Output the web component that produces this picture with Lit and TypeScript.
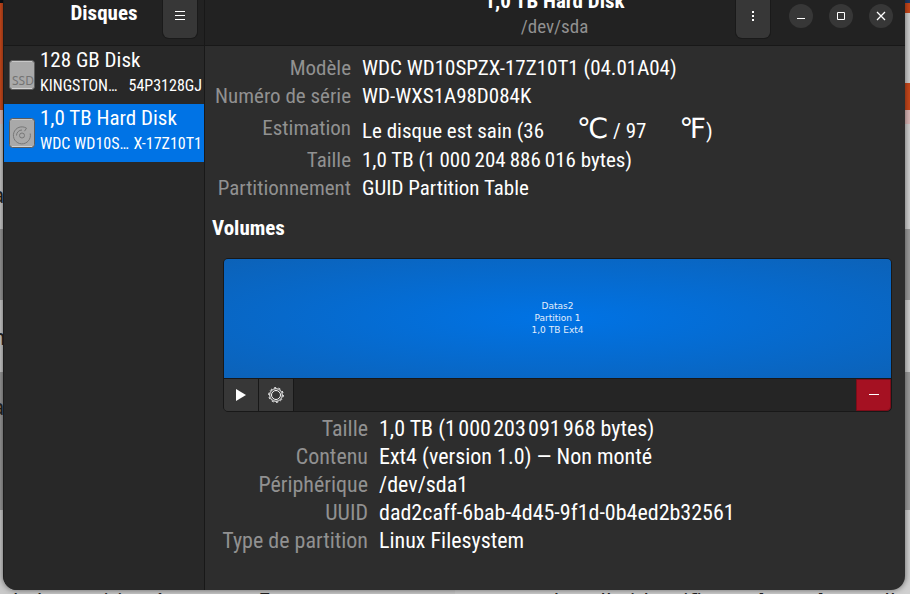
import { LitElement, html, css } from "lit";
import { customElement } from "lit/decorators.js";

type Row = [label: string, value: unknown];

const driveRows: Row[] = [
  ["Modèle", "WDC WD10SPZX-17Z10T1 (04.01A04)"],
  ["Numéro de série", "WD-WXS1A98D084K"],
  [
    "Estimation",
    html`Le disque est sain (36 <span class="unit">℃</span> / 97 <span class="unit">℉</span>)`,
  ],
  ["Taille", "1,0 TB (1\u2009000\u2009204\u2009886\u2009016 bytes)"],
  ["Partitionnement", "GUID Partition Table"],
];

const volumeRows: Row[] = [
  ["Taille", "1,0 TB (1\u200a000\u200a203\u200a091\u200a968 bytes)"],
  ["Contenu", "Ext4 (version 1.0) — Non monté"],
  ["Périphérique", "/dev/sda1"],
  ["UUID", "dad2caff-6bab-4d45-9f1d-0b4ed2b32561"],
  ["Type de partition", "Linux Filesystem"],
];

@customElement("app-root")
export class AppRoot extends LitElement {
  static styles = css`
    * {
      box-sizing: border-box;
    }
    :host {
      display: block;
      position: relative;
      height: 100vh;
      overflow: hidden;
      color: #fff;
      font: 22px/28px "Roboto Condensed", "Liberation Sans Narrow",
        "DejaVu Sans Condensed", sans-serif;
      background:
        linear-gradient(#0b1016 3px, #cc4a1c 3px 110px, #dcbcb8 110px 124px, #c9c9c9 124px 229px, #989898 229px 300px, #c9c9c9 300px 372px, #989898 372px 510px, #c9c9c9 510px) left / 50% 100% no-repeat,
        linear-gradient(#1e3a66 3px, #c9481b 3px 13px, #cfcfcf 13px 83px, #c9481b 83px 110px, #dcb8b8 110px 124px, #d0d0d0 124px 229px, #9c9c9c 229px 300px, #d0d0d0 300px 372px, #9c9c9c 372px 510px, #d0d0d0 510px) right / 50% 100% no-repeat;
    }
    button {
      display: grid;
      place-items: center;
      padding: 0;
      border: 0;
      color: #fff;
      background: #373737;
    }
    .behind {
      position: absolute;
      inset: auto 2px -20px 5px;
      display: flex;
      justify-content: space-between;
      white-space: pre;
      color: #222;
      font: 22px/28px "Noto Sans", sans-serif;
    }
    .edge {
      position: absolute;
      inset: 180px auto auto -8px;
      display: grid;
      grid-template-rows: 142px 70px 28px;
      color: #222;
      font: 22px/28px "Noto Sans", sans-serif;
    }
    .window {
      position: relative;
      display: grid;
      grid-template: 59px 1fr / 201px 1fr;
      height: calc(100% + 9px);
      margin: -13px 5px 0 3px;
      overflow: hidden;
      border-radius: 14px;
      border-left: 1px solid #1c1c1c;
      background: #2d2d2d;
      box-shadow: 0 0 6px #0008;
    }
    .bar {
      display: flex;
      align-items: center;
      gap: 12px;
      border-bottom: 1px solid #181818;
      background: #222;
    }
    .bar.left {
      padding: 0 7px;
      border-right: 1px solid #181818;
    }
    .bar.right {
      padding: 0 12px;
      gap: 16px;
    }
    h1,
    h2,
    p {
      margin: 0;
      font-size: 21px;
    }
    .bar h1 {
      flex: 1;
      padding: 0 0 6px 46px;
      text-align: center;
      line-height: 26px;
    }
    .title {
      flex: 1;
      padding: 0 0 4px 172px;
      text-align: center;
      line-height: 26px;
    }
    .title p,
    dt {
      color: #919191;
    }
    .title p {
      font-size: 19px;
    }
    .menu {
      width: 34px;
      height: 43px;
      border-radius: 6px;
      box-shadow: 0 0 0 1px #1a1a1a;
    }
    .more {
      margin-right: 3px;
    }
    .round {
      width: 24px;
      height: 24px;
      border-radius: 50%;
    }
    aside {
      border-right: 1px solid #181818;
      background: #282828;
    }
    .drive {
      display: flex;
      align-items: center;
      gap: 5px;
      width: 100%;
      height: 58px;
      padding: 0 2px 0 5px;
      text-align: left;
      font: inherit;
      background: none;
    }
    .drive.on {
      background: #0073e5;
    }
    .drive svg {
      flex: none;
    }
    .names {
      flex: 1;
      display: grid;
      padding-bottom: 6px;
      font-size: 21px;
      white-space: nowrap;
    }
    .names small {
      display: flex;
      justify-content: space-between;
      font-size: 16px;
      line-height: 24px;
    }
    main {
      padding: 8px 13px 0 7px;
    }
    dl {
      display: grid;
      grid-template-columns: 139px 1fr;
      column-gap: 11px;
      margin: 0;
      font-size: 21px;
    }
    dl.volume {
      grid-template-columns: 156px 1fr;
      margin-top: 3px;
      font-size: 22px;
    }
    dt {
      text-align: right;
      white-space: nowrap;
    }
    dd {
      margin: 0;
      white-space: nowrap;
    }
    .tall {
      height: 36px;
      line-height: 36px;
    }
    dd.tall {
      line-height: 42px;
    }
    .unit {
      display: inline-block;
      padding-left: 28px;
      font: 28px/28px "DejaVu Sans", sans-serif;
    }
    main h2 {
      margin-top: 12px;
    }
    .map {
      margin: 16px 0 0 11px;
      border: 1px solid #181818;
      border-radius: 5px;
      overflow: hidden;
      background: #252525;
    }
    .part {
      display: grid;
      place-content: center;
      justify-items: center;
      width: 100%;
      height: 120px;
      padding-bottom: 2px;
      color: #e4eefb;
      font: 9px/12px "DejaVu Sans", sans-serif;
      background: radial-gradient(ellipse farthest-corner, #0073e5, #0c62b8);
      border-bottom: 1px solid #181818;
    }
    .tools {
      display: flex;
      height: 32px;
    }
    .tools button {
      width: 35px;
      border-right: 1px solid #181818;
    }
    .tools .delete {
      width: 35px;
      margin-left: auto;
      border: 1px solid #7c0d19;
      border-radius: 0 0 4px 0;
      background: #a51122;
    }
  `;

  private rows(rows: Row[], kind: string) {
    return html`<dl class=${kind}>
      ${rows.map(([label, value]) => {
        const tall = label === "Estimation" ? "tall" : "";
        return html`<dt class=${tall}>${label}</dt><dd class=${tall}>${value}</dd>`;
      })}
    </dl>`;
  }

  private driveIcon(ssd: boolean) {
    return html`<svg width="26" height="30" viewBox="0 0 26 30" aria-hidden="true">
      <rect x=".5" y=".5" width="25" height="29" rx="3" fill="#a9a9a9" stroke="#5d5d5d" />
      <path d="M3 1.5h20" stroke="#c8c8c8" />
      <path d="M3 28.5h20" stroke="#d0d0d0" />
      ${ssd
        ? html`<svg><text x="3" y="25" font-family="Noto Sans" font-size="12" fill="#747474">SSD</text></svg>`
        : html`<svg fill="none" stroke="#777">
            <path d="M17.500 10.200A8.500 8.500 0 1 0 21.200 15.500M17.500 10.200l-2 3M7.500 17.500A5.500 5.500 0 0 1 13 12" />
            <circle cx="13" cy="17.500" r="2.500" />
          </svg>`}
    </svg>`;
  }

  render() {
    return html`
      <div class="edge"><span>a</span><span>n</span><span>a</span></div>
      <div class="behind">
        <span>de la partition à monter. Et</span>
        <span>de celle identifiant <b>/dev/sda2</b>, celle</span>
      </div>
      <div class="window">
        <header class="bar left">
          <h1>Disques</h1>
          <button class="menu" aria-label="Menu">
            <svg width="12" height="12" stroke="currentColor"><path d="M1 1.500h10M1 5.500h10M1 9.500h10" /></svg>
          </button>
        </header>
        <header class="bar right">
          <div class="title"><h2>1,0 TB Hard Disk</h2><p>/dev/sda</p></div>
          <button class="menu more" aria-label="Options du disque">
            <svg width="4" height="12" fill="currentColor"><path d="M1 1h2v2H1zM1 5h2v2H1zM1 9h2v2H1z" /></svg>
          </button>
          <button class="round" aria-label="Réduire">
            <svg width="10" height="10" stroke="currentColor"><path d="M1 7.500h8" /></svg>
          </button>
          <button class="round" aria-label="Agrandir">
            <svg width="10" height="10" fill="none" stroke="currentColor"><path d="M1.500 1.500h7v7h-7z" /></svg>
          </button>
          <button class="round" aria-label="Fermer">
            <svg width="10" height="10" stroke="currentColor" stroke-width="1.300"><path d="M1 1l8 8M9 1L1 9" /></svg>
          </button>
        </header>
        <aside>
          <button class="drive">
            ${this.driveIcon(true)}
            <span class="names"><span>128 GB Disk</span><small><span>KINGSTON…</span><span>54P3128GJ</span></small></span>
          </button>
          <button class="drive on">
            ${this.driveIcon(false)}
            <span class="names"><span>1,0 TB Hard Disk</span><small><span>WDC WD10S…</span><span>X-17Z10T1</span></small></span>
          </button>
        </aside>
        <main>
          ${this.rows(driveRows, "disk")}
          <h2>Volumes</h2>
          <div class="map">
            <button class="part"><span>Datas2</span><span>Partition 1</span><span>1,0 TB Ext4</span></button>
            <div class="tools">
              <button aria-label="Monter"><svg width="12" height="12" fill="currentColor"><path d="M1 0l10 6-10 6z" /></svg></button>
              <button aria-label="Options de partition">
                <svg width="16" height="16" fill="none" stroke="currentColor">
                  <circle cx="8" cy="8" r="4.500" /><circle cx="8" cy="8" r="6.300" />
                  <circle cx="8" cy="8" r="7.300" stroke-dasharray="2.200 2.387" />
                </svg>
              </button>
              <button class="delete" aria-label="Supprimer"><svg width="10" height="2" stroke="currentColor"><path d="M0 .5h10" /></svg></button>
            </div>
          </div>
          ${this.rows(volumeRows, "volume")}
        </main>
      </div>
    `;
  }
}
